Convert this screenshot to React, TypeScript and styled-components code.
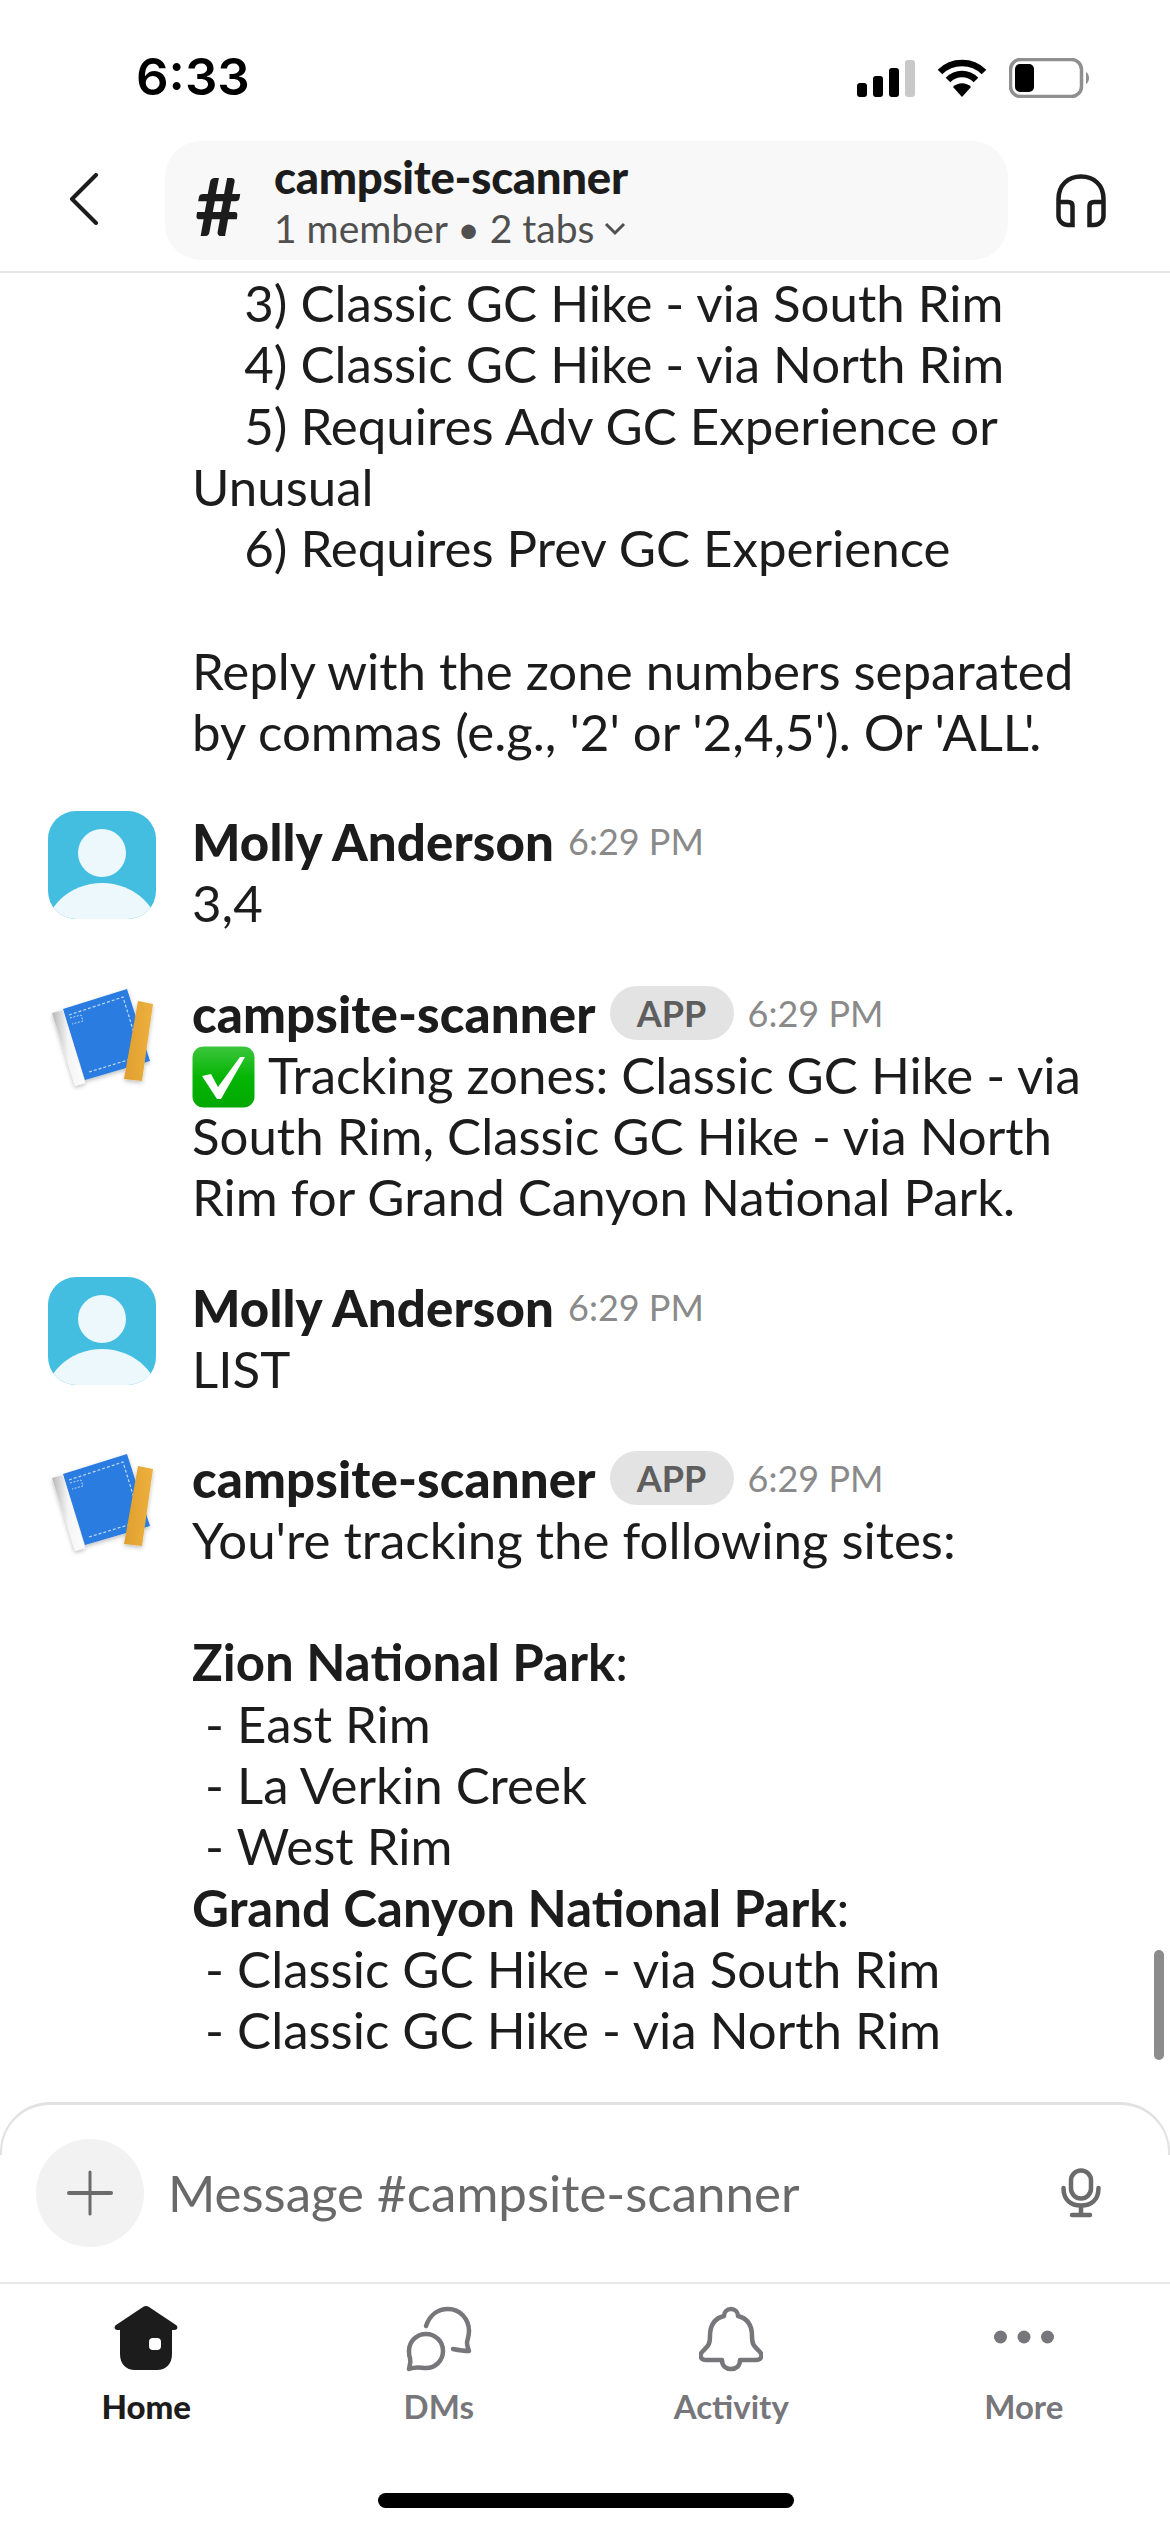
import React from "react";
import styled, { createGlobalStyle } from "styled-components";

const GlobalStyle = createGlobalStyle`
  html, body {
    margin: 0;
    padding: 0;
    background: #ffffff;
  }
  body {
    font-family: Lato, "Open Sans", sans-serif;
    color: #1d1c1d;
  }
`;

const Phone = styled.div`
  width: 1170px;
  height: 2532px;
  display: flex;
  flex-direction: column;
  overflow: hidden;
  position: relative;
  background: #fff;
`;

const StatusBar = styled.div`
  height: 141px;
  flex: none;
  box-sizing: border-box;
  padding: 50px 79px 0 136px;
  display: flex;
  justify-content: space-between;
  align-items: flex-start;
`;

const Clock = styled.div`
  font-family: Inter, "Liberation Sans", sans-serif;
  font-size: 51px;
  font-weight: 600;
  line-height: 54px;
  color: #000;
`;

const StatusIcons = styled.div`
  display: flex;
  align-items: center;
  gap: 22px;
  padding-top: 8px;
`;

const Header = styled.div`
  height: 132px;
  flex: none;
  box-sizing: border-box;
  border-bottom: 2px solid #e4e4e4;
  display: flex;
  align-items: flex-start;
  padding: 0 46px 0 68px;
`;

const BackButton = styled.div`
  width: 97px;
  height: 119px;
  box-sizing: border-box;
  padding-bottom: 4px;
  display: flex;
  align-items: center;
`;

const ChannelPill = styled.div`
  width: 843px;
  height: 119px;
  box-sizing: border-box;
  border-radius: 36px;
  background: #f8f8f8;
  display: flex;
  align-items: center;
  padding-left: 30px;
`;

const HashMark = styled.div`
  width: 79px;
  font-size: 80px;
  font-weight: 700;
  line-height: 1;
  padding-top: 8px;
`;

const ChannelText = styled.div`
  display: flex;
  flex-direction: column;
  padding-top: 3px;
`;

const ChannelName = styled.div`
  font-size: 45.5px;
  font-weight: 900;
  line-height: 50px;
  letter-spacing: -0.3px;
`;

const ChannelMeta = styled.div`
  margin-top: 3px;
  font-size: 39px;
  line-height: 47px;
  color: #505050;
  display: flex;
  align-items: center;
  gap: 10px;
`;

const HeadphoneSlot = styled.div`
  margin-left: 48px;
  height: 119px;
  display: flex;
  align-items: center;
`;

const Feed = styled.div`
  flex: 1;
  min-height: 0;
  overflow: hidden;
  position: relative;
`;

const Scrollbar = styled.div`
  position: absolute;
  right: 6px;
  top: 1677px;
  width: 10px;
  height: 110px;
  border-radius: 5px;
  background: #8c8c8c;
`;

const FirstBlock = styled.div`
  margin-top: -1px;
  padding: 0 60px 0 192px;
`;

const MessageText = styled.div`
  font-size: 51px;
  line-height: 61.3px;
  color: #1d1c1d;
  white-space: pre-wrap;
`;

const Row = styled.div`
  display: flex;
  padding: 0 60px 0 48px;
  margin-top: 49px;
`;

const AvatarSlot = styled.div`
  width: 108px;
  height: 108px;
  flex: none;
  margin-right: 36px;
`;

const Body = styled.div`
  flex: 1;
  min-width: 0;
`;

const NameLine = styled.div`
  display: flex;
  align-items: center;
  height: 61px;
  gap: 14px;
`;

const SenderName = styled.div`
  font-size: 51px;
  font-weight: 900;
  letter-spacing: 0.1px;
  line-height: 61px;
`;

const TimeStamp = styled.div`
  font-size: 36px;
  color: #8a8a8a;
  line-height: 61px;
`;

const AppBadge = styled.div`
  width: 124px;
  height: 54px;
  border-radius: 27px;
  background: #e3e3e3;
  color: #5e5e5e;
  font-size: 36px;
  font-weight: 700;
  line-height: 54px;
  text-align: center;
`;

const CheckEmoji = styled.span`
  display: inline-block;
  vertical-align: -8px;
  width: 63px;
  height: 30px;
  margin-right: 13px;

  svg {
    display: block;
    margin-top: -26px;
  }
`;

const Composer = styled.div`
  height: 180px;
  flex: none;
  box-sizing: border-box;
  border-top: 3px solid #e2e2e2;
  border-left: 2px solid #e2e2e2;
  border-right: 2px solid #e2e2e2;
  border-radius: 50px 50px 0 0;
  display: flex;
  align-items: flex-start;
  padding: 34px 67px 0 34px;
  position: relative;
`;

const ComposerEdgeMask = styled.div`
  position: absolute;
  left: -2px;
  right: -2px;
  top: 50px;
  bottom: 0;
  background: #fff;
  z-index: 0;
`;

const PlusCircle = styled.div`
  width: 108px;
  height: 108px;
  flex: none;
  border-radius: 50%;
  background: #f2f2f2;
  display: flex;
  align-items: center;
  justify-content: center;
  position: relative;
  z-index: 1;
`;

const Placeholder = styled.div`
  flex: 1;
  margin-left: 24px;
  font-size: 51px;
  line-height: 108px;
  color: #696969;
  position: relative;
  z-index: 1;
`;

const MicSlot = styled.div`
  height: 108px;
  display: flex;
  align-items: center;
  position: relative;
  z-index: 1;
`;

const TabBar = styled.div`
  height: 250px;
  flex: none;
  box-sizing: border-box;
  border-top: 2px solid #e8e8e8;
  display: grid;
  grid-template-columns: repeat(4, 292.5px);
  padding-top: 22px;
`;

const Tab = styled.div`
  display: flex;
  flex-direction: column;
  align-items: center;
`;

const TabIcon = styled.div`
  height: 68px;
  display: flex;
  align-items: flex-start;
  justify-content: center;
`;

const TabLabel = styled.div<{ $active?: boolean }>`
  margin-top: 12px;
  font-size: 33px;
  line-height: 40px;
  font-weight: ${({ $active }) => ($active ? 900 : 700)};
  color: ${({ $active }) => ($active ? "#1d1c1d" : "#77767a")};
`;

const HomeBar = styled.div`
  position: absolute;
  left: 378px;
  bottom: 24px;
  width: 416px;
  height: 15px;
  border-radius: 8px;
  background: #000;
`;

const PersonAvatar = () => (
  <svg width="108" height="108" viewBox="0 0 108 108">
    <defs>
      <clipPath id="avatarClip">
        <rect width="108" height="108" rx="28" />
      </clipPath>
    </defs>
    <g clipPath="url(#avatarClip)">
      <rect width="108" height="108" fill="#43bee0" />
      <circle cx="54" cy="42" r="24" fill="#edf8fd" />
      <ellipse cx="54" cy="128" rx="59" ry="56" fill="#edf8fd" />
    </g>
  </svg>
);

const AppAvatar = () => (
  <svg width="108" height="108" viewBox="0 0 108 108">
    <defs>
      <filter id="bookShadow" x="-20%" y="-20%" width="140%" height="140%">
        <feDropShadow dx="0" dy="2" stdDeviation="2" floodColor="#000" floodOpacity="0.25" />
      </filter>
      <linearGradient id="rollGrad" x1="0" y1="0.1" x2="1" y2="0">
        <stop offset="0" stopColor="#b5b5b5" />
        <stop offset="0.45" stopColor="#f5f5f5" />
        <stop offset="1" stopColor="#ffffff" />
      </linearGradient>
      <linearGradient id="rulerGrad" x1="0" y1="0" x2="1" y2="0">
        <stop offset="0" stopColor="#e09f2e" />
        <stop offset="1" stopColor="#edb13e" />
      </linearGradient>
    </defs>
    <g filter="url(#bookShadow)">
      <path d="M15 26 L79 6 L102 78 L37 97 Z" fill="#2a7be0" />
      <path d="M21 32 L75 14 L93 73 L41 89" fill="none" stroke="#bcd9f6" strokeWidth="1.2" strokeDasharray="3 2" />
      <path d="M22 35 L33 32 L35 38 L24 41" fill="none" stroke="#bcd9f6" strokeWidth="1" strokeDasharray="2 1.5" />
      <path d="M4 30 L15 27 L37 100 L27 103 Z" fill="url(#rollGrad)" />
      <path d="M90 18 L105 21 L94 98 L76 96 Z" fill="url(#rulerGrad)" />
    </g>
  </svg>
);

const BackChevron = () => (
  <svg width="32" height="52" viewBox="0 0 32 52" fill="none">
    <path d="M28 2 L4 26 L28 50" stroke="#1d1c1d" strokeWidth="4" strokeLinecap="round" strokeLinejoin="round" />
  </svg>
);

const Headphones = () => (
  <svg width="50" height="54" viewBox="0 0 50 54" fill="none" stroke="#1d1c1d" strokeWidth="4.5">
    <path d="M2.5 42 V25 C2.5 11 12 2.5 25 2.5 C38 2.5 47.5 11 47.5 25 V42" />
    <path d="M2.5 28 H12 C15 28 16.5 29.5 16.5 32 V51 H12 C7 51 2.5 47 2.5 42" />
    <path d="M47.5 28 H38 C35 28 33.5 29.5 33.5 32 V51 H38 C43 51 47.5 47 47.5 42" />
  </svg>
);

const CheckMark = () => (
  <svg width="63" height="62" viewBox="0 0 63 62">
    <defs>
      <linearGradient id="checkGrad" x1="0" y1="0" x2="0" y2="1">
        <stop offset="0" stopColor="#3cc63c" />
        <stop offset="0.5" stopColor="#05b505" />
        <stop offset="1" stopColor="#02a802" />
      </linearGradient>
    </defs>
    <rect x="0.5" y="0.5" width="62" height="61" rx="11" fill="url(#checkGrad)" />
    <path d="M10 30 L19 28 L26 41 L48 11 L53 11 L29 53 L25 53 Z" fill="#fff" />
  </svg>
);

const Mic = () => (
  <svg width="40" height="50" viewBox="0 0 40 50" fill="none" stroke="#6b6b6b" strokeWidth="4.5" strokeLinecap="round">
    <rect x="10" y="2.5" width="20" height="28" rx="10" />
    <path d="M2.5 20 C2.5 32 10 37.5 20 37.5 C30 37.5 37.5 32 37.5 20" />
    <path d="M20 38 V46 M11 47 H29" />
  </svg>
);

const HomeIcon = () => (
  <svg width="64" height="64" viewBox="0 0 64 64">
    <path
      d="M32 0 C33 0 34 0.4 35 1 L62 19 C64.5 21 63.5 24 60.5 24 L58 24 V48 C58 58 52 64 43 64 H21 C12 64 6 58 6 48 V24 L3.5 24 C0.5 24 -0.5 21 2 19 L29 1 C30 0.4 31 0 32 0 Z"
      fill="#1d1c1d"
    />
    <rect x="35" y="32" width="12" height="12" rx="4" fill="#fff" />
  </svg>
);

const DmsIcon = () => (
  <svg width="66" height="66" viewBox="0 0 66 66" fill="none" stroke="#77767a" strokeWidth="4.5" strokeLinecap="round" strokeLinejoin="round">
    <path d="M20 20 C24 8 33 3 42 3 C54 3 63 13 63 25 C63 31 61 34 61 37 C61 40 62 42 63 45 C57 45 52 44 47 43" />
    <path d="M20 28 C29.5 28 37 35.5 37 45 C37 54.5 29.5 62 20 62 C15 62 11 60 3 63 C4 58 5 56 4 52 C3 50 3 48 3 45 C3 35.5 10.5 28 20 28 Z" />
  </svg>
);

const BellIcon = () => (
  <svg width="64" height="66" viewBox="0 0 64 66" fill="none" stroke="#77767a" strokeWidth="4.5" strokeLinejoin="round">
    <path d="M32 3 C36 3 39 6 39 10 C47 12 53 18 53 30 C53 38 54 39 61 46 C64 50 62 54 57 54 H41 C41 60 37 63 32 63 C27 63 23 60 23 54 H7 C2 54 0 50 3 46 C10 39 11 38 11 30 C11 18 17 12 25 10 C25 6 28 3 32 3 Z" />
  </svg>
);

const MoreIcon = () => (
  <svg width="62" height="68" viewBox="0 0 62 68" fill="#77767a">
    <circle cx="7.5" cy="31" r="6.5" />
    <circle cx="31" cy="31" r="6.5" />
    <circle cx="54.5" cy="31" r="6.5" />
  </svg>
);

const Molly = ({ text }: { text: string }) => (
  <Row>
    <AvatarSlot>
      <PersonAvatar />
    </AvatarSlot>
    <Body>
      <NameLine>
        <SenderName>Molly Anderson</SenderName>
        <TimeStamp>6:29 PM</TimeStamp>
      </NameLine>
      <MessageText>{text}</MessageText>
    </Body>
  </Row>
);

const Scanner = ({ children }: { children: React.ReactNode }) => (
  <Row>
    <AvatarSlot>
      <AppAvatar />
    </AvatarSlot>
    <Body>
      <NameLine>
        <SenderName>campsite-scanner</SenderName>
        <AppBadge>APP</AppBadge>
        <TimeStamp>6:29 PM</TimeStamp>
      </NameLine>
      <MessageText>{children}</MessageText>
    </Body>
  </Row>
);

export default function App() {
  return (
    <>
      <GlobalStyle />
      <Phone>
        <StatusBar>
          <Clock>6:33</Clock>
          <StatusIcons>
            <svg width="58" height="38" viewBox="0 0 58 38" fill="#000">
              <rect x="0" y="24" width="10" height="14" rx="3" />
              <rect x="16" y="17" width="10" height="21" rx="3" />
              <rect x="32" y="9" width="10" height="29" rx="3" />
              <rect x="48" y="1" width="10" height="37" rx="3" fill="#c9c9c9" />
            </svg>
            <svg width="50" height="38" viewBox="0 0 50 38" fill="none" stroke="#000" strokeWidth="6.5">
              <path d="M3 13 C15 1 35 1 47 13" />
              <path d="M11 21 C19 13 31 13 39 21" />
              <path d="M25 38 L16 28 C21 23 29 23 34 28 Z" fill="#000" stroke="none" />
            </svg>
            <svg width="82" height="40" viewBox="0 0 82 40" fill="none">
              <rect x="1.5" y="1.5" width="71" height="37" rx="10" stroke="#8f8f8f" strokeWidth="3.5" />
              <rect x="6" y="6" width="19" height="28" rx="5" fill="#000" />
              <path d="M77 14 C81 16 81 24 77 26 Z" fill="#8f8f8f" />
            </svg>
          </StatusIcons>
        </StatusBar>
        <Header>
          <BackButton>
            <BackChevron />
          </BackButton>
          <ChannelPill>
            <HashMark>#</HashMark>
            <ChannelText>
              <ChannelName>campsite-scanner</ChannelName>
              <ChannelMeta>
                1 member • 2 tabs
                <svg width="22" height="14" viewBox="0 0 22 14" fill="none" stroke="#505050" strokeWidth="3">
                  <path d="M2 2 L11 11 L20 2" />
                </svg>
              </ChannelMeta>
            </ChannelText>
          </ChannelPill>
          <HeadphoneSlot>
            <Headphones />
          </HeadphoneSlot>
        </Header>
        <Feed>
          <FirstBlock>
            <MessageText>
              {"    3) Classic GC Hike - via South Rim\n    4) Classic GC Hike - via North Rim\n    5) Requires Adv GC Experience or Unusual\n    6) Requires Prev GC Experience\n\nReply with the zone numbers separated by commas (e.g., '2' or '2,4,5'). Or 'ALL'."}
            </MessageText>
          </FirstBlock>
          <Molly text="3,4" />
          <Scanner>
            <CheckEmoji>
              <CheckMark />
            </CheckEmoji>
            Tracking zones: Classic GC Hike - via South Rim, Classic GC Hike - via North Rim for Grand Canyon National Park.
          </Scanner>
          <Molly text="LIST" />
          <Scanner>
            {"You're tracking the following sites:\n\n"}
            <b>Zion National Park</b>
            {":\n - East Rim\n - La Verkin Creek\n - West Rim\n"}
            <b>Grand Canyon National Park</b>
            {":\n - Classic GC Hike - via South Rim\n - Classic GC Hike - via North Rim"}
          </Scanner>
          <Scrollbar />
        </Feed>
        <Composer>
          <ComposerEdgeMask />
          <PlusCircle>
            <svg width="46" height="46" viewBox="0 0 46 46" stroke="#6b6b6b" strokeLinecap="round">
              <path d="M23 2 V44" strokeWidth="3" />
              <path d="M2 23 H44" strokeWidth="4" />
            </svg>
          </PlusCircle>
          <Placeholder>Message #campsite-scanner</Placeholder>
          <MicSlot>
            <Mic />
          </MicSlot>
        </Composer>
        <TabBar>
          <Tab>
            <TabIcon>
              <HomeIcon />
            </TabIcon>
            <TabLabel $active>Home</TabLabel>
          </Tab>
          <Tab>
            <TabIcon>
              <DmsIcon />
            </TabIcon>
            <TabLabel>DMs</TabLabel>
          </Tab>
          <Tab>
            <TabIcon>
              <BellIcon />
            </TabIcon>
            <TabLabel>Activity</TabLabel>
          </Tab>
          <Tab>
            <TabIcon>
              <MoreIcon />
            </TabIcon>
            <TabLabel>More</TabLabel>
          </Tab>
        </TabBar>
        <HomeBar />
      </Phone>
    </>
  );
}
